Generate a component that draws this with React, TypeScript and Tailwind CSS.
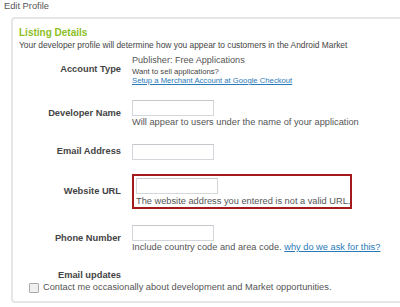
import React from 'react';

const font = { fontFamily: '"Liberation Sans", Arial, sans-serif' };

function Field() {
  return <div className="w-[82px] h-[16px] border border-[#d3d7dc] border-t-[#c4c8cd] bg-white" />;
}

function Row({ label, children, className = '' }: { label: string; children: React.ReactNode; className?: string }) {
  return (
    <div className={`flex items-center ${className}`}>
      <div className="w-[102px] shrink-0 text-right font-bold text-[9.3px] text-[#444]">{label}</div>
      <div className="ml-[11px]">{children}</div>
    </div>
  );
}

export default function App() {
  return (
    <div className="w-[400px] h-[307px] overflow-hidden bg-white text-[#444]" style={font}>
      {/* Title */}
      <div className="pl-[4px] pt-[1px] text-[9.3px] leading-[11px] text-[#555]">Edit Profile</div>

      {/* Panel */}
      <div className="mt-[5px] ml-[11px] w-[420px] h-[286px] border-2 border-[#e6e6e6] rounded-[4px] pl-[6px] pt-[8px]">
        <div className="text-[10px] leading-[12px] font-bold text-[#8cbf1f]">Listing Details</div>
        <div className="text-[8.4px] leading-[10px] text-[#444] mt-[1px]">
          Your developer profile will determine how you appear to customers in the Android Market
        </div>

        <Row label="Account Type" className="mt-[5px]">
          <div className="text-[9.1px] leading-[11px] text-[#555]">Publisher: Free Applications</div>
          <div className="text-[7.7px] leading-[9px] text-[#444] mt-[1px]">Want to sell applications?</div>
          <a href="#" className="block text-[7.7px] leading-[9px] text-[#2a7ab8] underline">
            Setup a Merchant Account at Google Checkout
          </a>
        </Row>

        <Row label="Developer Name" className="mt-[15px]">
          <Field />
          <div className="whitespace-nowrap text-[9.25px] leading-[11px] text-[#555] mt-[1px]">
            Will appear to users under the name of your application
          </div>
        </Row>

        <Row label="Email Address" className="mt-[16px]">
          <Field />
        </Row>

        <Row label="Website URL" className="mt-[14px]">
          <div className="w-[220px] h-[35px] border-2 border-[#a3191c] pl-[2px] pt-[2px]">
            <Field />
            <div className="whitespace-nowrap text-[9.25px] leading-[11px] text-[#555] mt-[2px]">
              The website address you entered is not a valid URL.
            </div>
          </div>
        </Row>

        <Row label="Phone Number" className="mt-[16px]">
          <Field />
          <div className="whitespace-nowrap text-[9.25px] leading-[11px] text-[#555] mt-[1px]">
            Include country code and area code.{' '}
            <a href="#" className="text-[#2a7ab8] underline">why do we ask for this?</a>
          </div>
        </Row>

        <div className="mt-[17px] w-[102px] text-right font-bold text-[9.3px] leading-[11px] text-[#444]">Email updates</div>
        <label className="flex items-center ml-[10px] mt-[1px]">
          <span className="w-[10px] h-[10px] border border-[#a8a8a8] bg-[#f0f0f0] rounded-[1px]" />
          <span className="ml-[4px] whitespace-nowrap text-[9.25px] leading-[11px] text-[#555]">
            Contact me occasionally about development and Market opportunities.
          </span>
        </label>
      </div>
    </div>
  );
}
